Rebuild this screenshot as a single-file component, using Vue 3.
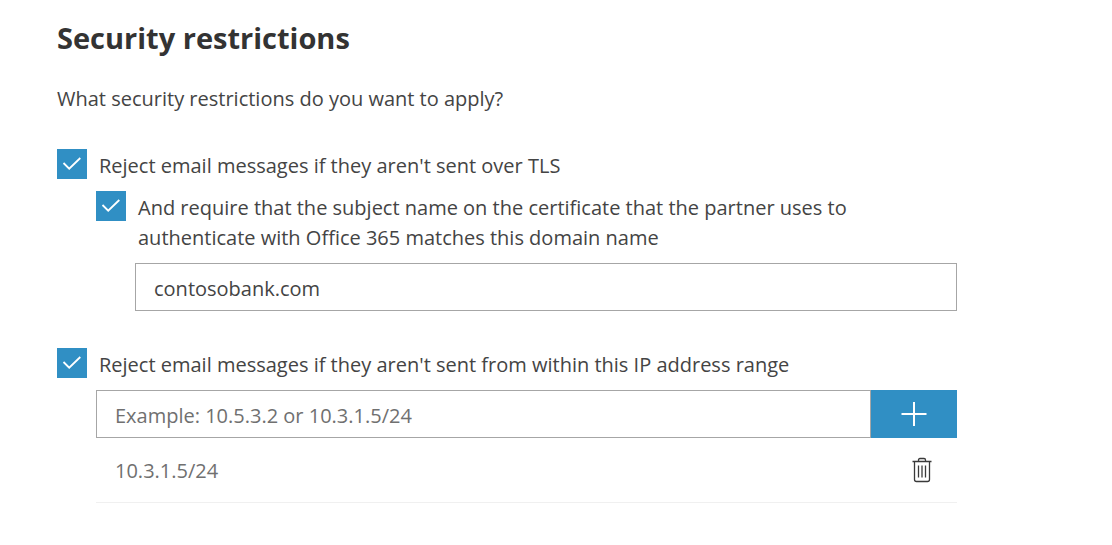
<script setup>
import { ref } from 'vue'

const requireTls = ref(true)
const requireSubject = ref(true)
const restrictRange = ref(true)
const domain = ref('contosobank.com')
const address = ref('')
const ranges = ref(['10.3.1.5/24'])

function addRange() {
  const value = address.value.trim()
  if (value) ranges.value.push(value)
  address.value = ''
}
</script>

<template>
  <main class="page">
    <h1>Security restrictions</h1>
    <p class="intro">What security restrictions do you want to apply?</p>

    <section class="group">
      <label class="option">
        <span class="tick">
          <input v-model="requireTls" type="checkbox" />
          <svg viewBox="0 0 30 30" aria-hidden="true"><path d="M6.500 14L12.200 19.700L23.300 9" /></svg>
        </span>
        <span class="text">Reject email messages if they aren't sent over TLS</span>
      </label>
      <div class="nested">
        <label class="option">
          <span class="tick">
            <input v-model="requireSubject" type="checkbox" />
            <svg viewBox="0 0 30 30" aria-hidden="true"><path d="M6.500 14L12.200 19.700L23.300 9" /></svg>
          </span>
          <span class="text subject">And require that the subject name on the certificate that the partner uses to authenticate with Office 365 matches this domain name</span>
        </label>
        <div class="nested">
          <input v-model="domain" class="field" type="text" aria-label="Domain name" />
        </div>
      </div>
    </section>

    <section class="group">
      <label class="option">
        <span class="tick">
          <input v-model="restrictRange" type="checkbox" />
          <svg viewBox="0 0 30 30" aria-hidden="true"><path d="M6.500 14L12.200 19.700L23.300 9" /></svg>
        </span>
        <span class="text">Reject email messages if they aren't sent from within this IP address range</span>
      </label>
      <div class="nested">
        <form class="entry" @submit.prevent="addRange">
          <input v-model="address" class="field" type="text" placeholder="Example: 10.5.3.2 or 10.3.1.5/24" aria-label="IP address range" />
          <button class="add" type="submit" aria-label="Add">
            <svg viewBox="0 0 26 26" aria-hidden="true"><path d="M13 1V25M.5 13H25.500" /></svg>
          </button>
        </form>
        <ul class="ranges">
          <li v-for="(range, i) in ranges" :key="i">
            <span class="text">{{ range }}</span>
            <button class="remove" type="button" aria-label="Delete" @click="ranges.splice(i, 1)">
              <svg viewBox="0 0 20 26" aria-hidden="true">
                <path d="M.5 4.500H19.500M6.500 4V3Q6.500 1.500 8 1.500H12Q13.500 1.500 13.500 3V4M2.500 4.500V22.500Q2.500 24.500 4.500 24.500H15.500Q17.500 24.500 17.500 22.500V4.500" />
                <path d="M6.500 8.500V20.500M10 8.500V20.500M13.500 8.500V20.500" />
              </svg>
            </button>
          </li>
        </ul>
      </div>
    </section>
  </main>
</template>

<style>
body {
  margin: 0;
  background: #fff;
}
</style>

<style scoped>
.page {
  box-sizing: border-box;
  padding: 16px 155px 16px 57px;
  font-family: "Open Sans", "Noto Sans", sans-serif;
  font-size: 20px;
  line-height: 30px;
  color: #444;
}
h1 {
  margin: 0;
  font-size: 29px;
  line-height: 44px;
  font-weight: 700;
  color: #333;
}
.intro {
  margin: 24px 0 35px;
}
.group + .group {
  margin-top: 37px;
}
.option {
  display: flex;
  align-items: flex-start;
  gap: 12px;
  margin-bottom: 10px;
}
.tick {
  display: grid;
  flex: none;
  width: 30px;
  height: 30px;
}
.tick input {
  grid-area: 1 / 1;
  appearance: none;
  box-sizing: border-box;
  width: 30px;
  height: 30px;
  margin: 0;
  border: 1px solid #a6a6a6;
  background: #fff;
}
.tick input:checked {
  border-color: #308fc4;
  background: #308fc4;
}
.tick svg {
  grid-area: 1 / 1;
  z-index: 1;
  pointer-events: none;
  fill: none;
  stroke: #fff;
  stroke-width: 1.800;
}
.text {
  padding-top: 2px;
}
.subject {
  max-width: 720px;
}
.nested {
  margin-left: 39px;
}
.field {
  display: block;
  box-sizing: border-box;
  width: 100%;
  min-width: 0;
  height: 48px;
  padding: 2px 18px 0;
  border: 1px solid #a6a6a6;
  border-radius: 0;
  background: #fff;
  color: #444;
  font: inherit;
}
.field::placeholder {
  color: #707070;
  opacity: 1;
}
.entry {
  display: flex;
}
.entry .field {
  flex: 1;
}
.add {
  display: grid;
  flex: none;
  place-items: center;
  width: 86px;
  height: 48px;
  padding: 0;
  border: 0;
  background: #308fc4;
}
.add svg {
  width: 26px;
  height: 26px;
  fill: none;
  stroke: #fff;
  stroke-width: 2;
}
.ranges {
  margin: 0;
  padding: 0;
  list-style: none;
}
.ranges li {
  display: flex;
  align-items: center;
  justify-content: space-between;
  height: 64px;
  padding: 0 25px 0 19px;
  border-bottom: 1px solid #f0f0f0;
  color: #707070;
}
.remove {
  display: grid;
  padding: 0;
  border: 0;
  background: none;
}
.remove svg {
  width: 20px;
  height: 26px;
  fill: none;
  stroke: #3a3a3a;
  stroke-width: 1.300;
}
</style>
